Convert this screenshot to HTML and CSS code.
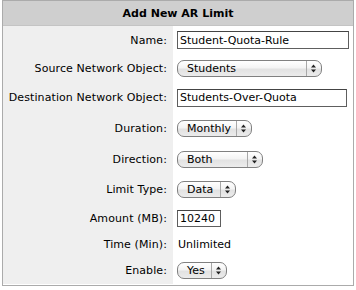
FILE: index.html
```html
<!DOCTYPE html>
<html>
<head>
<meta charset="utf-8">
<link rel="stylesheet" href="styles.css">
</head>
<body>
<div class="panel">
  <div class="header">Add New AR Limit</div>
  <div class="grid">
    <div class="label">Name:</div>
    <div class="field"><span class="input w-name">Student-Quota-Rule</span></div>

    <div class="label">Source Network Object:</div>
    <div class="field"><span class="select w-src"><span class="sel-text">Students</span><span class="sel-arrow"><svg width="7" height="9" viewBox="0 0 7 9"><path d="M3.5 0.5L6 3.5H1Z M3.5 8.5L6 5.5H1Z" fill="#222"/></svg></span></span></div>

    <div class="label">Destination Network Object:</div>
    <div class="field"><span class="input w-dst">Students-Over-Quota</span></div>

    <div class="label">Duration:</div>
    <div class="field"><span class="select w-mon"><span class="sel-text">Monthly</span><span class="sel-arrow"><svg width="7" height="9" viewBox="0 0 7 9"><path d="M3.5 0.5L6 3.5H1Z M3.5 8.5L6 5.5H1Z" fill="#222"/></svg></span></span></div>

    <div class="label">Direction:</div>
    <div class="field"><span class="select w-both"><span class="sel-text">Both</span><span class="sel-arrow"><svg width="7" height="9" viewBox="0 0 7 9"><path d="M3.5 0.5L6 3.5H1Z M3.5 8.5L6 5.5H1Z" fill="#222"/></svg></span></span></div>

    <div class="label">Limit Type:</div>
    <div class="field"><span class="select w-data"><span class="sel-text">Data</span><span class="sel-arrow"><svg width="7" height="9" viewBox="0 0 7 9"><path d="M3.5 0.5L6 3.5H1Z M3.5 8.5L6 5.5H1Z" fill="#222"/></svg></span></span></div>

    <div class="label">Amount (MB):</div>
    <div class="field"><span class="input w-amt">10240</span></div>

    <div class="label">Time (Min):</div>
    <div class="field plain">Unlimited</div>

    <div class="label">Enable:</div>
    <div class="field"><span class="select w-yes"><span class="sel-text">Yes</span><span class="sel-arrow"><svg width="7" height="9" viewBox="0 0 7 9"><path d="M3.5 0.5L6 3.5H1Z M3.5 8.5L6 5.5H1Z" fill="#222"/></svg></span></span></div>
  </div>
</div>
</body>
</html>
```
FILE: styles.css
```css
* { box-sizing: border-box; }
body {
  margin: 0 0 0 2px;
  font-family: "DejaVu Sans", Verdana, sans-serif;
  font-size: 11px;
  color: #000;
  background: #fff;
}
.panel {
  width: 352px;
  height: 286px;
  border: 1px solid #ababab;
  background: #fff;
}
.header {
  height: 25px;
  background: #cfcfcf;
  font-weight: bold;
  text-align: center;
  line-height: 25px;
  border-bottom: 1px solid #c4c4c4;
}
.grid {
  display: grid;
  grid-template-columns: 170px 1fr;
  grid-template-rows: 28px 28px 31px 31px 30px 30px 28px 25px 27px;
  background: linear-gradient(to right, #efefef 0, #efefef 170px, #fff 170px);
}
.label {
  grid-column: 1;
  display: flex;
  align-items: center;
  justify-content: flex-end;
  padding-right: 6px;
  white-space: nowrap;
  letter-spacing: 0.1px;
}
.field {
  grid-column: 2;
  display: flex;
  align-items: center;
  padding-left: 4px;
}
.plain { padding-left: 5px; }
.input {
  display: flex;
  align-items: center;
  height: 18px;
  border: 1px solid #5e5e5e;
  border-top-color: #444;
  background: #fff;
  padding-left: 2px;
  white-space: nowrap;
}
.w-name { width: 172px; }
.w-dst { width: 170px; }
.w-amt { width: 44px; height: 17px; }
.select {
  display: flex;
  align-items: stretch;
  height: 17px;
  border: 1px solid #808080;
  border-radius: 7px;
  background: linear-gradient(to bottom, #ffffff 0%, #f4f4f4 45%, #e2e2e2 55%, #ececec 100%);
  overflow: hidden;
}
.sel-text {
  flex: 1;
  display: flex;
  align-items: center;
  padding-left: 9px;
  white-space: nowrap;
}
.sel-arrow {
  width: 15px;
  display: flex;
  align-items: center;
  justify-content: center;
  border-left: 1px solid #a8a8a8;
  padding-right: 1px;
}
.w-src { width: 145px; }
.w-mon { width: 75px; }
.w-both { width: 86px; }
.w-data { width: 59px; }
.w-yes { width: 50px; }
```
